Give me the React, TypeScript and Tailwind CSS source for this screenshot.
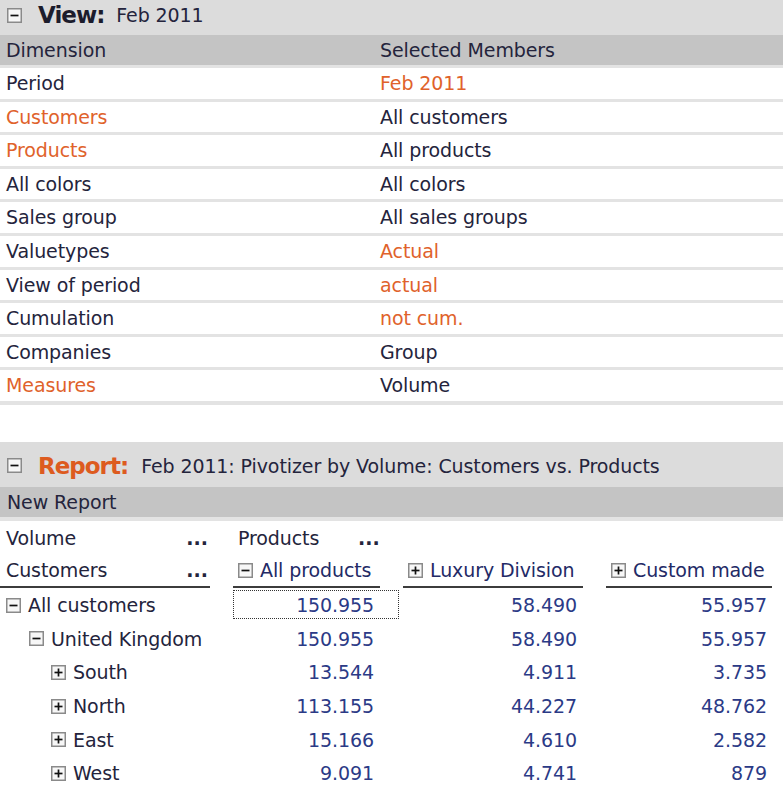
import React from "react";

const Box = ({ minus }: { minus?: boolean }) => (
  <svg width="15" height="15" viewBox="0 0 15 15" className="shrink-0">
    <rect x="0.75" y="0.75" width="13.5" height="13.5" fill="#f7f7f7" stroke="#8a8a8a" strokeWidth="1.5" />
    <line x1="3.5" y1="7.5" x2="11.5" y2="7.5" stroke="#111" strokeWidth="1.7" />
    {!minus && <line x1="7.5" y1="3.5" x2="7.5" y2="11.5" stroke="#111" strokeWidth="1.7" />}
  </svg>
);

const ORANGE = "text-[#e0622b]";
const DARK = "text-[#24243c]";

const viewRows: [string, boolean, string, boolean][] = [
  ["Period", false, "Feb 2011", true],
  ["Customers", true, "All customers", false],
  ["Products", true, "All products", false],
  ["All colors", false, "All colors", false],
  ["Sales group", false, "All sales groups", false],
  ["Valuetypes", false, "Actual", true],
  ["View of period", false, "actual", true],
  ["Cumulation", false, "not cum.", true],
  ["Companies", false, "Group", false],
  ["Measures", true, "Volume", false],
];

const dataRows: { label: string; indent: number; minus: boolean; v: [string, string, string] }[] = [
  { label: "All customers", indent: 0, minus: true, v: ["150.955", "58.490", "55.957"] },
  { label: "United Kingdom", indent: 1, minus: true, v: ["150.955", "58.490", "55.957"] },
  { label: "South", indent: 2, minus: false, v: ["13.544", "4.911", "3.735"] },
  { label: "North", indent: 2, minus: false, v: ["113.155", "44.227", "48.762"] },
  { label: "East", indent: 2, minus: false, v: ["15.166", "4.610", "2.582"] },
  { label: "West", indent: 2, minus: false, v: ["9.091", "4.741", "879"] },
];

const indentCls = ["pl-[6px]", "pl-[29px]", "pl-[51px]"];

export default function App() {
  return (
    <div className={`w-[783px] h-[795px] overflow-hidden bg-white font-['DejaVu_Sans',sans-serif] text-[19px] tracking-[-0.1px] ${DARK}`}>
      {/* View header */}
      <div className="h-[35px] bg-[#dcdcdc] flex items-center pl-[7px] pb-[5px]">
        <Box minus />
        <span className="ml-[16px] font-bold text-[23px] tracking-[-1px] text-[#1c1c2c]">View:</span>
        <span className="ml-[12px]">Feb 2011</span>
      </div>
      <div className="h-[30px] bg-[#c4c4c4] flex items-center">
        <div className="w-[380px] pl-[6px]">Dimension</div>
        <div>Selected Members</div>
      </div>
      {viewRows.map(([a, ao, b, bo]) => (
        <div key={a} className="h-[33.6px] border-t-[3.6px] border-[#e3e3e3] flex items-center">
          <div className={`w-[380px] pl-[6px] ${ao ? ORANGE : ""}`}>{a}</div>
          <div className={bo ? ORANGE : ""}>{b}</div>
        </div>
      ))}
      <div className="h-[4px] bg-[#e3e3e3]" />
      <div className="h-[37px]" />

      {/* Report header */}
      <div className="h-[45px] bg-[#dcdcdc] flex items-center pl-[7px] pt-[3px]">
        <Box minus />
        <span className="ml-[16px] font-bold text-[23px] tracking-[-1px] text-[#dd5b1f]">Report:</span>
        <span className="ml-[13px]">Feb 2011: Pivotizer by Volume: Customers vs. Products</span>
      </div>
      <div className="h-[30px] bg-[#c4c4c4] flex items-center pl-[7px]">New Report</div>
      <div className="h-[4px] bg-[#e3e3e3]" />

      {/* Pivot */}
      <div className="grid grid-cols-[210px_147px_180px_166px] gap-x-[23px]">
        <div className="h-[33.7px] flex items-center justify-between pl-[6px] pr-[2px]">
          <span>Volume</span>
          <span className="font-bold tracking-[0px]">...</span>
        </div>
        <div className="h-[33.7px] flex items-center pl-[5px]">
          <span className="w-[120px]">Products</span>
          <span className="font-bold tracking-[0px]">...</span>
        </div>
        <div />
        <div />

        <div className="h-[33.7px] flex items-center justify-between pl-[6px] pr-[2px] border-b-2 border-[#3c3c3c]">
          <span>Customers</span>
          <span className="font-bold tracking-[0px]">...</span>
        </div>
        <div className="h-[33.7px] flex items-center gap-[7px] pl-[5px] border-b-2 border-[#3c3c3c] text-[#232a66]">
          <Box minus />
          <span>All products</span>
        </div>
        <div className="h-[33.7px] flex items-center gap-[7px] pl-[5px] border-b-2 border-[#3c3c3c] text-[#232a66]">
          <Box />
          <span>Luxury Division</span>
        </div>
        <div className="h-[33.7px] flex items-center gap-[7px] pl-[5px] border-b-2 border-[#3c3c3c] text-[#232a66]">
          <Box />
          <span>Custom made</span>
        </div>

        {dataRows.map((r, i) => (
          <React.Fragment key={r.label}>
            <div className={`h-[33.7px] flex items-center gap-[7px] ${indentCls[r.indent]}`}>
              <Box minus={r.minus} />
              <span>{r.label}</span>
            </div>
            <div className="relative h-[33.7px] flex items-center justify-end pr-[6px] text-[#2b3a86]">
              {i === 0 && (
                <span className="absolute top-[2px] bottom-[3px] left-0 right-[-19px] border border-dotted border-[#333]" />
              )}
              {r.v[0]}
            </div>
            <div className="h-[33.7px] flex items-center justify-end pr-[6px] text-[#2b3a86]">{r.v[1]}</div>
            <div className="h-[33.7px] flex items-center justify-end pr-[5px] text-[#2b3a86]">{r.v[2]}</div>
          </React.Fragment>
        ))}
      </div>
    </div>
  );
}
